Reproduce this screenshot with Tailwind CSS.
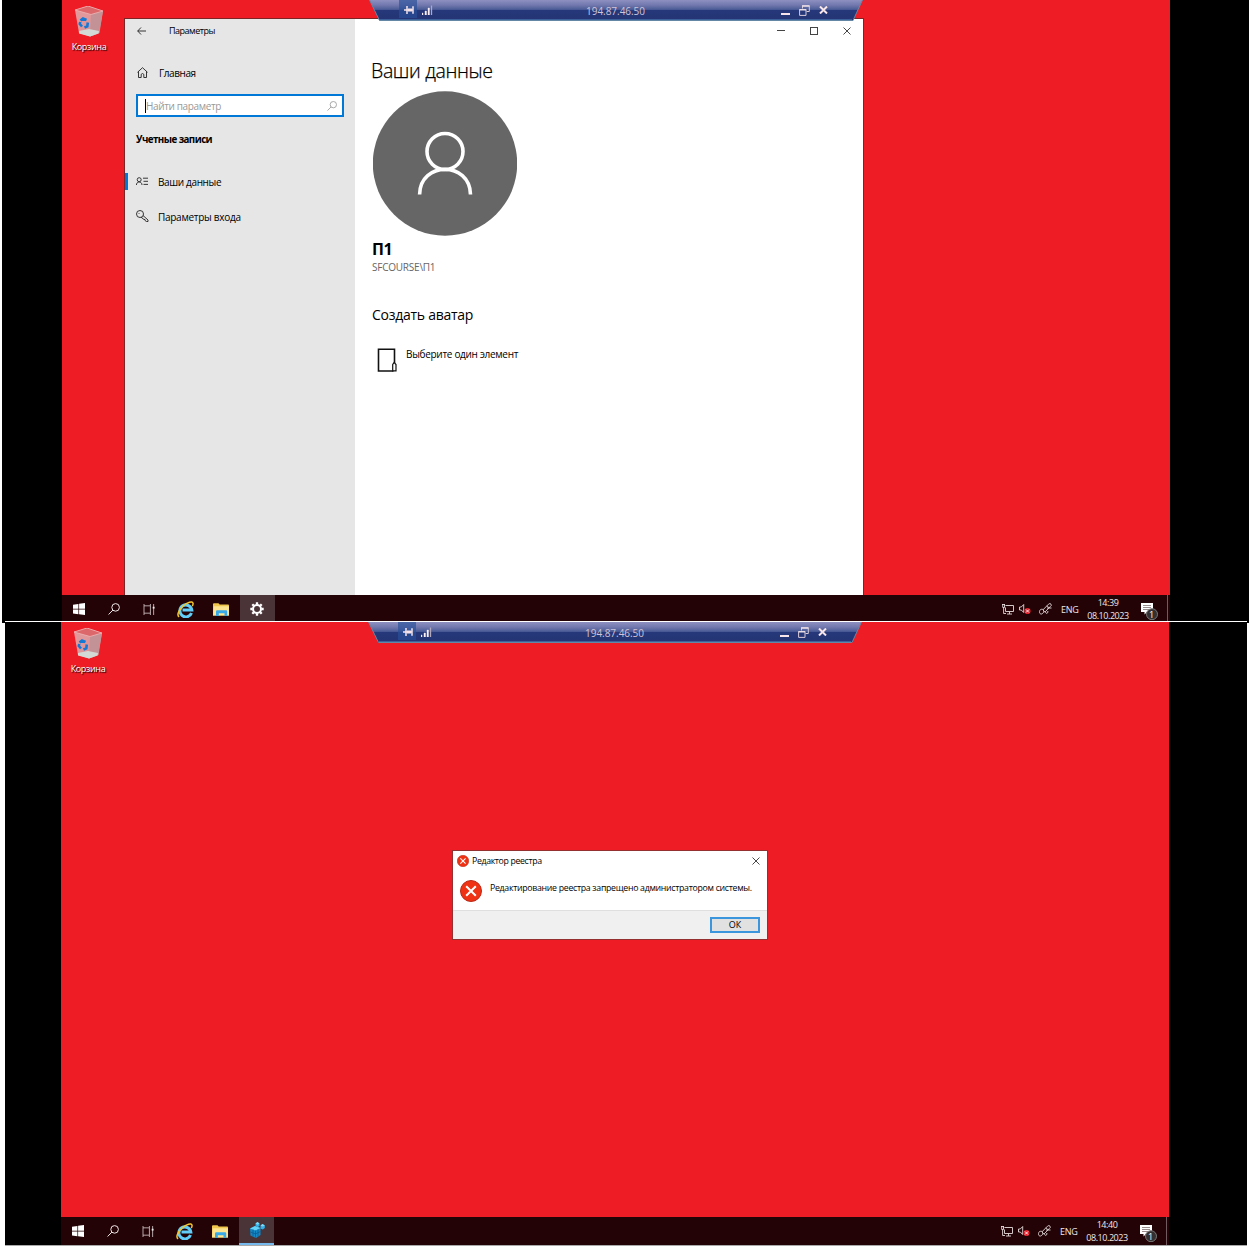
<!DOCTYPE html>
<html lang="ru">
<head>
<meta charset="utf-8">
<title>194.87.46.50</title>
<script src="https://cdn.jsdelivr.net/npm/@tailwindcss/browser@4"></script>
</head>
<body class="w-[1250px] h-[1246px] overflow-hidden bg-white font-['Open_Sans','Noto_Sans',sans-serif] text-black">
<svg width="0" height="0" class="absolute">
  <defs>
    <linearGradient id="bar" x1="0" y1="0" x2="0" y2="1">
      <stop offset="0" stop-color="#8d90c0"/><stop offset=".25" stop-color="#7278ae"/><stop offset=".46" stop-color="#4c5c97"/><stop offset=".5" stop-color="#26387a"/><stop offset="1" stop-color="#243474"/>
    </linearGradient>
    <linearGradient id="glass" x1="0" y1="0" x2="1" y2="1">
      <stop offset="0" stop-color="#e59a9d"/><stop offset=".6" stop-color="#dc979a"/><stop offset="1" stop-color="#c99a9d"/>
    </linearGradient>
    <symbol id="bin" viewBox="0 0 28 31">
      <path d="M0 4 13 0 28 5 24 27 15 30.500 4 27Z" fill="url(#glass)"/>
      <path d="M16 8 28 5 24.500 27 15 30.500Z" fill="#c29296"/>
      <path d="M0 4 13 0 28 5 16 8.500Z" fill="#dc686c" stroke="#eeb5b5" stroke-width=".8"/>
      <path d="M4 25 14 23 24 25 23.500 27.500 15 30.500 4 27.500Z" fill="#d3dad5"/>
      <path d="M5.500 14.500 8 12.500 11.500 14M12.800 16.500 12.300 20.300 9.500 21.500M7 20.500 4.800 18 5.300 16" fill="none" stroke="#1379d6" stroke-width="2.600"/>
    </symbol>
    <symbol id="win" viewBox="0 0 12 12"><path d="M0 1.700 5.400.9V5.700H0ZM6.100.8 12 0V5.700H6.100ZM0 6.400H5.400V11.200L0 10.400ZM6.100 6.400H12V12L6.100 11.300Z" fill="#fff"/></symbol>
    <symbol id="find" viewBox="0 0 12 12"><circle cx="7.600" cy="4.400" r="3.800" fill="none" stroke="currentColor"/><path d="M4.900 7.100.6 11.500" stroke="currentColor"/></symbol>
    <symbol id="task" viewBox="0 0 13 12"><path d="M.5 0V2H7.500V0M.5 12V10H7.500V12M.5 2V10M7.500 2V10M11 0V12" fill="none" stroke="#d4c8c9" stroke-width=".9"/><path d="M10 3H12V5H10Z" fill="#eee"/></symbol>
    <symbol id="ie" viewBox="0 0 17 17">
      <path d="M14.500 12A6 6 0 1 1 14.800 9H5.500" fill="none" stroke="#62cdf7" stroke-width="3"/>
      <path d="M2.200 15.800C-.5 14.500 1.500 9 6 5S15.500-.3 16 2.200C16.200 3.300 15.700 4.500 15.300 5.200" fill="none" stroke="#f4c62f" stroke-width="1.500"/>
    </symbol>
    <symbol id="files" viewBox="0 0 16 13"><path d="M0 1.200Q0 .2 1 .2H5.500L6.700 1.600H15.200Q16 1.600 16 2.500V12.500H0Z" fill="#f0c64c"/><path d="M.7 3.200H16V12.500H0Z" fill="#fde491"/><path d="M3 13V8.500Q3 7.300 4.200 7.300H13Q14.200 7.300 14.200 8.500V13H11.500V10.300H5.800V13Z" fill="#37a9e8"/></symbol>
    <symbol id="gear" viewBox="0 0 14 14"><circle cx="7" cy="7" r="4" fill="none" stroke="#fff" stroke-width="2"/><path d="M7 .3V2.500M7 11.500V13.700M.3 7H2.500M11.500 7H13.700M2.300 2.300 3.800 3.800M10.200 10.200 11.700 11.700M2.300 11.700 3.800 10.200M10.200 3.800 11.700 2.300" stroke="#fff" stroke-width="2.300"/></symbol>
    <symbol id="reg" viewBox="0 0 16 16"><path d="M1 6.500 6 4 11.500 6V13L7 16 1.500 13.500Z" fill="#1588c5"/><path d="M1 6.500 6 4 11.500 6 6.500 8.500Z" fill="#65d2f7"/><path d="M6.500 8.500V15.500M1.500 10 6.500 12 11.500 9.500M4 7.500V14.500M9 7.500V14.500" stroke="#0a5d95" stroke-width=".8" fill="none"/><path d="M6.500 1.500 8.500 0 10.500 1.500V4L8.500 5.300 6.500 4ZM11.500 3.500 13.500 2 15.800 3.500V6L13.800 7.500 11.500 6.500Z" fill="#35afe6"/><path d="M6.500 1.500 8.500 0 10.500 1.500 8.500 2.700ZM11.500 3.500 13.500 2 15.800 3.500 13.700 4.600Z" fill="#7bdcf9"/></symbol>
    <symbol id="net" viewBox="0 0 12 11"><path d="M3.500 1.500H11.500V7.500H3.500V3.500M7.500 7.500V10M5 10H10M0 .5H3M.7 0V3.500H2.500V0M1.600 3.500V9.500H4" fill="none" stroke="#e6dcdc" stroke-width=".9"/></symbol>
    <symbol id="mute" viewBox="0 0 12 12"><path d="M.5 4H2.300L4.700 1.500V9.500L2.300 7H.5Z" fill="none" stroke="#e6dcdc" stroke-width=".9"/><circle cx="8.500" cy="8" r="3.100" fill="#e3202b"/><path d="M7 6.500 10 9.500M10 6.500 7 9.500" stroke="#fff" stroke-width=".9"/></symbol>
    <symbol id="pen" viewBox="0 0 13 12"><path d="M4.800 8.800 4.300 6.500 9.500 1.200Q11-.2 12 1.200T11.300 3.500L6.500 8.500ZM8 2.800 10 4.800M4.500 6.700C2 5.500.2 7 .5 9.300S3.500 11.800 4.800 8.800M6.500 8.500C6 11 9.500 11 8.800 8M8 5H12.500" fill="none" stroke="#e6dcdc" stroke-width=".9"/></symbol>
    <symbol id="note" viewBox="0 0 18 17"><path d="M0 0H12V9H6L3.500 11.500V9H0Z" fill="#fff"/><path d="M2 2.500H10M2 4.500H10M2 6.500H8" stroke="#806f70" stroke-width=".8"/><circle cx="11" cy="11.200" r="5.500" fill="#343031" stroke="#777"/></symbol>
    <symbol id="rdp" viewBox="0 0 494 22"><path d="M.5 0 10.500 20.500H484L493.500 0Z" fill="url(#bar)"/><path d="M.5 0 10.500 20.500H484L493.500 0" fill="none" stroke="#6487a5"/><path d="M11 19.500H483" stroke="#3b629b"/><path d="M30 0H48V18H30Z" fill="#28509a" fill-opacity=".65"/></symbol>
    <symbol id="pin" viewBox="0 0 10 8"><path d="M0 4H3M3 0V8M3 4H9M9 .3V7.700" stroke="#f6e4ea" stroke-width="1.500"/><path d="M4 2.500H8V5.500H4Z" fill="#f6e4ea"/></symbol>
    <symbol id="signal" viewBox="0 0 11 10"><path d="M0 8H1V10H0ZM3 6H4.500V10H3ZM6 3H7.500V10H6Z" fill="#fff4f8" stroke="#f2e6ee" stroke-width=".4"/><path d="M9.500 .5V10" stroke="#b0a8c0" stroke-width="1.300"/></symbol>
    <symbol id="restore" viewBox="0 0 11 11"><path d="M3.500 3.500V.8H10.300V6.500H7.500M.6 4.500H7V10.400H.6Z" fill="none" stroke="#d8cbd8"/><path d="M3 1H10.500M.5 4.700H7.200" stroke="#e8dce5" stroke-width="1.500"/></symbol>
    <symbol id="error" viewBox="0 0 22 22"><circle cx="11" cy="11" r="10.500" fill="#ef3213" stroke="#b92a19"/><path d="M6.200 6.200 15.800 15.800M15.800 6.200 6.200 15.800" stroke="#fff" stroke-width="2"/></symbol>
    <symbol id="x" viewBox="0 0 8 8"><path d="M.5.5 7.500 7.500M7.500.5.5 7.500" stroke="currentColor" stroke-width=".9"/></symbol>
  </defs>
</svg>

<!-- First session: account settings -->
<section class="ml-[2px] w-[1247px] h-[623px] bg-black pl-[60px]">
  <div class="relative flex w-[1108px] h-[623px] flex-col justify-between bg-[#ee1c25]">
    <div class="flex w-[54px] flex-col items-center pt-[6px]">
      <svg class="h-[31px] w-[28px]"><use href="#bin"/></svg>
      <span class="mt-[3px] text-[9px] leading-[14px] tracking-[-0.35px] text-white [text-shadow:1px_1px_1px_#000]">Корзина</span>
    </div>

    <main class="absolute left-[62px] top-[18px] flex h-[577px] w-[740px] border-t border-x border-[#7d2427] bg-white">
      <aside class="flex w-[230px] flex-col bg-[#e6e6e6]">
        <div class="flex h-[23px] items-center pl-[12px]">
          <svg class="h-[8px] w-[9px]" viewBox="0 0 9 8"><path d="M4 .5.7 4 4 7.500M.7 4H9" fill="none" stroke="#222" stroke-width=".9"/></svg>
          <span class="ml-[23px] text-[9px] tracking-[-0.5px]">Параметры</span>
        </div>
        <div class="mt-[20px] flex h-[20px] items-center pl-[12px]">
          <svg class="h-[11px] w-[11px]" viewBox="0 0 11 11"><path d="M.5 5.300 5.500.7 10.500 5.300M1.500 4.500V10.500H4.200V7.300Q5.500 5.700 6.800 7.300V10.500H9.500V4.500" fill="none" stroke="#222" stroke-width=".9"/></svg>
          <span class="ml-[11px] mt-[2px] text-[10px] tracking-[-0.43px]">Главная</span>
        </div>
        <div class="mt-[12px] ml-[11px] flex h-[23px] w-[208px] items-center border-2 border-[#0078d7] bg-white px-[5px] text-[#999]">
          <span class="ml-[2px] h-[14px] w-px bg-black"></span>
          <span class="mt-[2px] flex-1 text-[10px] tracking-[-0.37px]">Найти параметр</span>
          <svg class="h-[10px] w-[10px]"><use href="#find"/></svg>
        </div>
        <h2 class="mt-[13px] flex h-[20px] items-center pl-[11px] pt-px text-[9.75px] font-bold tracking-[-0.55px]">Учетные записи</h2>
        <div class="mt-[21px] flex h-[20px] items-center">
          <span class="h-[17px] w-[3px] bg-[#0078d7]"></span>
          <svg class="ml-[8px] h-[9px] w-[12px]" viewBox="0 0 12 9"><circle cx="3.200" cy="2.700" r="2" fill="none" stroke="#222" stroke-width=".9"/><path d="M.4 8C.4 4 6 4 6 8M7 1.200H12M7.500 4.300H12M7.500 7.400H12" fill="none" stroke="#222" stroke-width=".9"/></svg>
          <span class="ml-[10px] mt-[2px] text-[10px] tracking-[-0.36px]">Ваши данные</span>
        </div>
        <div class="mt-[15px] flex h-[20px] items-center pl-[11px]">
          <svg class="h-[12px] w-[13px]" viewBox="0 0 13 12"><circle cx="4" cy="4" r="3.500" fill="none" stroke="#222" stroke-width=".9"/><path d="M7 5.500 12 10V11.500H10.500L9 10.500V9.500H8L5 7.200M2.500 3 3.300 3.800" fill="none" stroke="#222" stroke-width=".9"/></svg>
          <span class="ml-[9px] mt-[2px] text-[10px] tracking-[-0.28px]">Параметры входа</span>
        </div>
      </aside>
      <div class="flex-1">
        <div class="flex h-[23px] items-center justify-end gap-[25px] pr-[12px] text-[#333]">
          <span class="h-px w-[8px] bg-[#444]"></span>
          <span class="h-[8px] w-[8px] border border-[#444]"></span>
          <svg class="h-[8px] w-[8px]"><use href="#x"/></svg>
        </div>
        <div class="flex flex-col items-start pl-[16px]">
          <h1 class="mt-[15px] text-[19.500px] font-light leading-[28px] tracking-[-0.35px] whitespace-nowrap [-webkit-text-stroke:0.25px_#000]">Ваши данные</h1>
          <svg class="mt-[6px] ml-[2px] h-[145px] w-[144px]" viewBox="0 0 144 145"><circle cx="72" cy="72.500" r="72.200" fill="#666"/><circle cx="72" cy="60.500" r="18" fill="none" stroke="#fff" stroke-width="3.600"/><path d="M46.600 103.500C47 70 97 70 97.500 103.500" fill="none" stroke="#fff" stroke-width="3.600"/></svg>
          <div class="mt-[2px] ml-px text-[16px] font-bold leading-[22px] tracking-[-0.3px]">П1</div>
          <div class="ml-[1px] text-[10px] leading-[14px] tracking-[-0.23px] text-[#666]">SFCOURSE\П1</div>
          <h3 class="mt-[31px] ml-px text-[14px] leading-[20px] tracking-[-0.27px]">Создать аватар</h3>
          <div class="mt-[21px] ml-[6px] flex gap-[9px]">
            <svg class="mt-[2px] h-[24px] w-[20px]" viewBox="0 0 20 24"><path d="M16.500 23H1.500V1.200H17.500V15" fill="none" stroke="#111" stroke-width="1.600"/><path d="M15.700 22.800V16.500L17.200 14.500 19 16.500V22.800Z" fill="#fff" stroke="#111" stroke-width="1.200"/></svg>
            <span class="mt-px text-[10px] leading-[14px] tracking-[-0.3px]">Выберите один элемент</span>
          </div>
        </div>
      </div>
    </main>

    <header class="absolute left-[307px] top-0 h-[22px] w-[494px]">
      <svg class="h-[22px] w-[494px]"><use href="#rdp"/></svg>
      <div class="absolute inset-0 flex h-[20px] items-center pl-[35px]">
        <svg class="h-[8px] w-[10px]"><use href="#pin"/></svg>
        <svg class="ml-[8px] h-[10px] w-[11px]"><use href="#signal"/></svg>
        <span class="ml-[153px] mt-[2px] w-[60px] text-[10px] text-[#d1c4d8] tracking-[-0.03px]">194.87.46.50</span>
        <span class="ml-[135px] mt-[7px] h-[2px] w-[9px] bg-[#f6e4ea]"></span>
        <svg class="ml-[9px] h-[11px] w-[11px]"><use href="#restore"/></svg>
        <svg class="ml-[9px] h-[8px] w-[9px]" viewBox="0 0 9 8"><path d="M1 .5 8 7.500M8 .5 1 7.500" stroke="#f8e6e8" stroke-width="2"/></svg>
      </div>
    </header>

    <footer class="flex h-[28px] items-center bg-[#230306] text-[#f0e8e8]">
      <div class="flex h-full w-[35px] items-center justify-center pr-[2px]"><svg class="h-[12px] w-[12px]"><use href="#win"/></svg></div>
      <div class="flex h-full w-[35px] items-center justify-center pr-[2px]"><svg class="h-[12px] w-[12px]"><use href="#find"/></svg></div>
      <div class="flex h-full w-[34px] items-center justify-center"><svg class="h-[11px] w-[13px]"><use href="#task"/></svg></div>
      <div class="flex h-full w-[38px] items-center justify-center"><svg class="h-[17px] w-[17px]"><use href="#ie"/></svg></div>
      <div class="flex h-full w-[36px] items-center justify-center pr-[2px]"><svg class="h-[13px] w-[16px]"><use href="#files"/></svg></div>
      <div class="flex h-full w-[35px] items-center justify-center bg-[#4b3438] pr-px"><svg class="h-[14px] w-[14px]"><use href="#gear"/></svg></div>
      <div class="ml-auto flex h-full items-center">
        <svg class="h-[11px] w-[12px]"><use href="#net"/></svg>
        <svg class="ml-[5px] h-[12px] w-[12px]"><use href="#mute"/></svg>
        <svg class="ml-[8px] h-[12px] w-[13px]"><use href="#pen"/></svg>
        <span class="ml-[9px] mt-px w-[18px] text-[9px] tracking-[-0.3px]">ENG</span>
        <div class="ml-[8px] flex w-[42px] flex-col items-center text-[9px] leading-[13px] tracking-[-0.45px]"><span>14:39</span><span>08.10.2023</span></div>
        <div class="relative ml-[12px] mt-[4px] h-[17px] w-[18px]"><svg class="h-[17px] w-[18px]"><use href="#note"/></svg><span class="absolute left-[8px] top-[5px] text-[9px] leading-[13px] text-white">1</span></div>
        <span class="ml-[8px] mr-[2px] h-full w-px bg-[#705c60]"></span>
      </div>
    </footer>
  </div>
</section>

<!-- Second session: registry editor blocked -->
<section class="relative -mt-[2px] ml-[5px] w-[1242px] border-t border-b border-t-white border-b-[#aaa] bg-black pl-[56px]">
  <div class="relative flex w-[1108px] h-[623px] flex-col justify-between bg-[#ee1c25]">
    <div class="flex w-[54px] flex-col items-center pt-[6px]">
      <svg class="h-[31px] w-[28px]"><use href="#bin"/></svg>
      <span class="mt-[3px] text-[9px] leading-[14px] tracking-[-0.35px] text-white [text-shadow:1px_1px_1px_#000]">Корзина</span>
    </div>

    <header class="absolute left-[307px] top-0 h-[22px] w-[494px]">
      <svg class="h-[22px] w-[494px]"><use href="#rdp"/></svg>
      <div class="absolute inset-0 flex h-[20px] items-center pl-[35px]">
        <svg class="h-[8px] w-[10px]"><use href="#pin"/></svg>
        <svg class="ml-[8px] h-[10px] w-[11px]"><use href="#signal"/></svg>
        <span class="ml-[153px] mt-[2px] w-[60px] text-[10px] text-[#d1c4d8] tracking-[-0.03px]">194.87.46.50</span>
        <span class="ml-[135px] mt-[7px] h-[2px] w-[9px] bg-[#f6e4ea]"></span>
        <svg class="ml-[9px] h-[11px] w-[11px]"><use href="#restore"/></svg>
        <svg class="ml-[9px] h-[8px] w-[9px]" viewBox="0 0 9 8"><path d="M1 .5 8 7.500M8 .5 1 7.500" stroke="#f8e6e8" stroke-width="2"/></svg>
      </div>
    </header>

    <div role="dialog" class="absolute left-[391px] top-[228px] flex h-[90px] w-[316px] flex-col border border-[#94302f] bg-white">
      <div class="flex h-[20px] items-center pl-[4px] pr-[7px] text-[#333]">
        <svg class="h-[12px] w-[12px]"><use href="#error"/></svg>
        <span class="ml-[3px] mt-px flex-1 text-[8.75px] tracking-[-0.35px] text-black">Редактор реестра</span>
        <svg class="h-[8px] w-[8px]"><use href="#x"/></svg>
      </div>
      <div class="flex h-[39px] items-center pl-[7px]">
        <svg class="h-[22px] w-[22px] shrink-0"><use href="#error"/></svg>
        <span class="ml-[8px] mb-[3px] text-[8.75px] tracking-[-0.29px] whitespace-nowrap">Редактирование реестра запрещено администратором системы.</span>
      </div>
      <div class="flex flex-1 items-center justify-end border-t border-[#dfdfdf] bg-[#f0f0f0] pr-[7px]">
        <button class="flex h-[16px] w-[50px] items-center justify-center border-2 border-[#3b96dd] bg-[#e1e1e1] text-[9px]">ОК</button>
      </div>
    </div>

    <footer class="flex h-[28px] items-center bg-[#230306] text-[#f0e8e8]">
      <div class="flex h-full w-[35px] items-center justify-center pr-[2px]"><svg class="h-[12px] w-[12px]"><use href="#win"/></svg></div>
      <div class="flex h-full w-[35px] items-center justify-center pr-[2px]"><svg class="h-[12px] w-[12px]"><use href="#find"/></svg></div>
      <div class="flex h-full w-[34px] items-center justify-center"><svg class="h-[11px] w-[13px]"><use href="#task"/></svg></div>
      <div class="flex h-full w-[38px] items-center justify-center"><svg class="h-[17px] w-[17px]"><use href="#ie"/></svg></div>
      <div class="flex h-full w-[36px] items-center justify-center pr-[2px]"><svg class="h-[13px] w-[16px]"><use href="#files"/></svg></div>
      <div class="flex h-full w-[35px] items-center justify-center border-b-2 border-[#76b9ed] bg-[#4b3438]"><svg class="h-[16px] w-[16px]"><use href="#reg"/></svg></div>
      <div class="ml-auto flex h-full items-center">
        <svg class="h-[11px] w-[12px]"><use href="#net"/></svg>
        <svg class="ml-[5px] h-[12px] w-[12px]"><use href="#mute"/></svg>
        <svg class="ml-[8px] h-[12px] w-[13px]"><use href="#pen"/></svg>
        <span class="ml-[9px] mt-px w-[18px] text-[9px] tracking-[-0.3px]">ENG</span>
        <div class="ml-[8px] flex w-[42px] flex-col items-center text-[9px] leading-[13px] tracking-[-0.45px]"><span>14:40</span><span>08.10.2023</span></div>
        <div class="relative ml-[12px] mt-[4px] h-[17px] w-[18px]"><svg class="h-[17px] w-[18px]"><use href="#note"/></svg><span class="absolute left-[8px] top-[5px] text-[9px] leading-[13px] text-white">1</span></div>
        <span class="ml-[8px] mr-[2px] h-full w-px bg-[#705c60]"></span>
      </div>
    </footer>
  </div>
</section>
</body>
</html>
